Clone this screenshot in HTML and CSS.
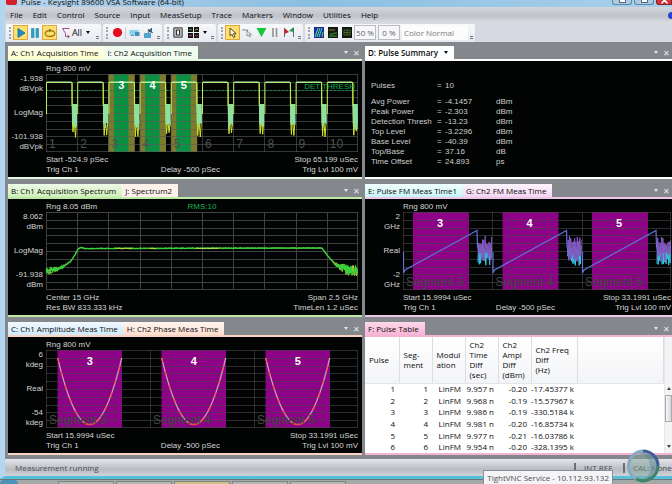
FILE: index.html
```html
<!DOCTYPE html>
<html lang="en">
<head>
<meta charset="utf-8">
<title>Pulse - Keysight 89600 VSA Software (64-bit)</title>
<link rel="stylesheet" href="styles.css">
</head>
<body>
<div class="window">
  <header class="titlebar">
    <span class="app-icon"></span>
    <span class="title">Pulse - Keysight 89600 VSA Software (64-bit)</span>
    <span class="win-buttons">
      <button class="win-btn" aria-label="Minimize"><i></i></button>
      <button class="win-btn" aria-label="Maximize"><i></i></button>
      <button class="win-btn close" aria-label="Close"><svg width="7" height="4" viewBox="0 0 7 4"><path d="M3.500 0L6.500 3.500M3.500 0L.5 3.500" stroke="#fff" stroke-width="1.500"/></svg></button>
    </span>
  </header>

  <nav class="menubar">
    <button>File</button><button>Edit</button><button>Control</button><button>Source</button><button>Input</button><button>MeasSetup</button><button>Trace</button><button>Markers</button><button>Window</button><button>Utilities</button><button>Help</button>
    <span class="help-dot"></span>
  </nav>

  <div class="toolbars">
    <div class="toolbar">
      <span class="grip"></span>
      <button class="tool on" aria-label="Run"><svg width="10" height="12" viewBox="0 0 10 12"><path d="M2 1.500L9 6L2 10.500Z" fill="#1c8fc4" stroke="#0c6a9c" stroke-width=".8"/></svg></button>
      <button class="tool" aria-label="Pause"><svg width="8" height="10" viewBox="0 0 8 10"><path d="M.5.500h2.500v9h-2.500zM5 .500h2.500v9H5z" fill="#2fa3c6" stroke="#1b7fa4" stroke-width=".6"/></svg></button>
      <button class="tool on" aria-label="Repeat"><svg width="12" height="10" viewBox="0 0 12 10"><ellipse cx="6" cy="5.500" rx="4.800" ry="3" fill="none" stroke="#9a7a18" stroke-width="1.300"/><path d="M5 .500L8 2.600L5 4.500Z" fill="#9a7a18"/></svg></button>
      <button class="tool all"><svg width="9" height="12" viewBox="0 0 9 12"><path d="M8.500 1.500H1.500L4.500 6.500V9.500H8" fill="none" stroke="#a0508c"/><path d="M6.500 8l2 1.500l-2 1.500" fill="none" stroke="#555" stroke-width=".8"/></svg><span>All</span><b class="caret"></b></button>
      <span class="more"></span>
    </div>
    <div class="toolbar">
      <span class="grip"></span>
      <button class="tool" aria-label="Record"><svg width="11" height="11" viewBox="0 0 11 11"><circle cx="5.500" cy="5.500" r="4.600" fill="#e30c1c"/></svg></button>
      <span class="rule"></span>
      <button class="tool" aria-label="Playback"><svg width="11" height="8" viewBox="0 0 11 8"><path d="M.5 1h9v5H.5z" fill="#8ad2ea"/><path d="M6 3h4.500v4H6z" fill="#4390b8"/><path d="M2 6h3v1H2z" fill="#5d90ac"/></svg></button>
      <button class="tool" aria-label="Recording options"><svg width="11" height="12" viewBox="0 0 11 12"><path d="M1 6h7v5H1z" fill="#4ea6d0"/><path d="M4 4l5-3v5z" fill="#456f91"/><path d="M9 1l-4 5M5 2l5 4" stroke="#345" stroke-width=".8"/></svg></button>
      <span class="more"></span>
    </div>
    <div class="toolbar">
      <span class="grip"></span>
      <button class="tool" aria-label="Single trace"><svg width="10" height="11" viewBox="0 0 10 11"><path d="M.8.800h8.400v9.400H.8z" fill="#b5b5b8" stroke="#444"/><path d="M3.500 3h3v5h-3z" fill="#eee" stroke="#333"/></svg></button>
      <button class="tool layout" aria-label="Trace layout"><svg width="11" height="11" viewBox="0 0 11 11"><path d="M0 0h5v5H0zM6 0h5v5H6zM0 6h5v5H0zM6 6h5v5H6z" fill="#151515"/><path d="M1 3l1-1l2 1" stroke="#6d6" fill="none" stroke-width=".7"/><path d="M7 3l2-1l1 1" stroke="#dd5" fill="none" stroke-width=".7"/><path d="M1 9l2-1l1 1" stroke="#d6c" fill="none" stroke-width=".7"/><path d="M7 8l2 1l1-1" stroke="#d66" fill="none" stroke-width=".7"/></svg><b class="caret"></b></button>
      <span class="more"></span>
    </div>
    <div class="toolbar">
      <span class="grip"></span>
      <button class="tool on" aria-label="Select"><svg width="10" height="12" viewBox="0 0 10 12"><path d="M2 1v8l2-1.800l1.500 3.300l1.500-.7l-1.500-3.100h2.700z" fill="#fff6d0" stroke="#4a3c10" stroke-width=".9"/></svg></button>
      <button class="tool" aria-label="Marker line"><svg width="11" height="11" viewBox="0 0 11 11"><path d="M0 3h5.500v4" fill="none" stroke="#888"/><path d="M5 4v5l1.500-1l1 2l1-.5l-1-2h2z" fill="#eee" stroke="#777" stroke-width=".7"/></svg></button>
      <button class="tool" aria-label="Marker"><svg width="11" height="11" viewBox="0 0 11 11"><path d="M.5 1h10L5.500 10z" fill="#12c63c"/></svg></button>
      <button class="tool" aria-label="Band"><svg width="10" height="11" viewBox="0 0 10 11"><path d="M3 1v9M6.500 1v9" stroke="#8b8b8e" stroke-width="1.500"/></svg></button>
      <button class="tool" aria-label="Limit flags"><svg width="12" height="11" viewBox="0 0 12 11"><path d="M1.500 1v9M10.500 1v9" stroke="#667" stroke-width="1"/><path d="M1.500 1l4.500 4l-4.500 2z" fill="#d41c30"/><path d="M10.500 0L6 4L10.500 5z" fill="#1c9c4c"/></svg></button>
      <span class="more"></span>
    </div>
    <div class="toolbar">
      <span class="grip"></span>
      <button class="tool" aria-label="Persistence"><svg width="10" height="11" viewBox="0 0 10 11"><path d="M0 0h10v11H0z" fill="#182a8c"/><path d="M1 10L4 1M5 10L8 1" stroke="#27b7e0" stroke-width="1.300"/><path d="M3 10L6 1M8 10l1-5" stroke="#8bc93c"/></svg></button>
      <button class="tool" aria-label="Spectrogram"><svg width="10" height="11" viewBox="0 0 10 11"><path d="M0 0h10v11H0z" fill="#121812"/><path d="M1 9h8M2 7h3l2-1h2" stroke="#49a23d" fill="none"/><path d="M1 3h6" stroke="#8a7a22"/></svg></button>
      <button class="tool" aria-label="Density"><svg width="10" height="11" viewBox="0 0 10 11"><path d="M0 0h10v11H0z" fill="#10180e"/><path d="M2 3h6v5H2zM2 5.500h6M5 3v5" stroke="#4d7a2c" fill="none" stroke-width=".8"/></svg></button>
      <input class="pct" aria-label="Color start" value="50 %">
      <input class="pct" aria-label="Color stop" value="0 %">
      <select class="scheme" aria-label="Color scheme"><option>Color Normal</option></select>
      <span class="more"></span>
    </div>
  </div>

  <main class="workspace">
    <section class="panel p-a">
      <div class="tabs">
        <button class="tab yellow">A: Ch1 Acquisition Time</button><button class="tab mint">I: Ch2 Acquisition Time</button>
        <span class="tools"><b class="caret"></b><button aria-label="Close trace">✕</button></span>
      </div>
      <div class="trace">
        <div class="head"><span>Rng 800 mV</span></div>
        <div class="axis"><span>-1.938<br>dBVpk</span><span>LogMag</span><span>-101.938<br>dBVpk</span></div>
        <div class="plot" id="plot-a"></div>
        <div class="foot"><p><span>Start -524.9 pSec</span><span>Stop 65.199 uSec</span></p><p><span>Trig Ch 1</span><span>Delay -500 pSec</span><span>Trig Lvl 100 mV</span></p></div>
      </div>
    </section>

    <section class="panel p-d">
      <div class="tabs">
        <button class="tab white">D: Pulse Summary <b class="caret"></b></button>
        <span class="tools"><b class="caret"></b><button aria-label="Close trace">✕</button></span>
      </div>
      <div class="summary">
        <dl>
          <dt>Pulses</dt><dd>=</dd><dd>10</dd><dd></dd>
        </dl>
        <dl>
          <dt>Avg Power</dt><dd>=</dd><dd>-4.1457</dd><dd>dBm</dd>
          <dt>Peak Power</dt><dd>=</dd><dd>-2.303</dd><dd>dBm</dd>
          <dt>Detection Thresh</dt><dd>=</dd><dd>-13.23</dd><dd>dBm</dd>
          <dt>Top Level</dt><dd>=</dd><dd>-3.2296</dd><dd>dBm</dd>
          <dt>Base Level</dt><dd>=</dd><dd>-40.39</dd><dd>dBm</dd>
          <dt>Top/Base</dt><dd>=</dd><dd>37.16</dd><dd>dB</dd>
          <dt>Time Offset</dt><dd>=</dd><dd>24.893</dd><dd>ps</dd>
        </dl>
      </div>
    </section>

    <section class="panel p-b">
      <div class="tabs">
        <button class="tab green">B: Ch1 Acquisition Spectrum</button><button class="tab cream">J: Spectrum2</button>
        <span class="tools"><b class="caret"></b><button aria-label="Close trace">✕</button></span>
      </div>
      <div class="trace">
        <div class="head"><span>Rng 8.05 dBm</span><span class="rms">RMS:10</span></div>
        <div class="axis"><span>8.062<br>dBm</span><span>LogMag</span><span>-91.938<br>dBm</span></div>
        <div class="plot" id="plot-b"></div>
        <div class="foot"><p><span>Center 15 GHz</span><span>Span 2.5 GHz</span></p><p><span>Res BW 833.333 kHz</span><span>TimeLen 1.2 uSec</span></p></div>
      </div>
    </section>

    <section class="panel p-e">
      <div class="tabs">
        <button class="tab cyan">E: Pulse FM Meas Time1</button><button class="tab lilac">G: Ch2 FM Meas Time</button>
        <span class="tools"><b class="caret"></b><button aria-label="Close trace">✕</button></span>
      </div>
      <div class="trace edge">
        <div class="head"><span>Rng 800 mV</span></div>
        <div class="axis"><span>2<br>GHz</span><span>Real</span><span>-2<br>GHz</span></div>
        <div class="plot" id="plot-e"></div>
        <div class="foot"><p><span>Start 15.9994 uSec</span><span>Stop 33.1991 uSec</span></p><p><span>Trig Ch 1</span><span>Delay -500 pSec</span><span>Trig Lvl 100 mV</span></p></div>
      </div>
    </section>

    <section class="panel p-c">
      <div class="tabs">
        <button class="tab blue">C: Ch1 Amplitude Meas Time</button><button class="tab peach">H: Ch2 Phase Meas Time</button>
        <span class="tools"><b class="caret"></b><button aria-label="Close trace">✕</button></span>
      </div>
      <div class="trace">
        <div class="head"><span>Rng 800 mV</span></div>
        <div class="axis"><span>6<br>kdeg</span><span>Real</span><span>-54<br>kdeg</span></div>
        <div class="plot" id="plot-c"></div>
        <div class="foot"><p><span>Start 15.9994 uSec</span><span>Stop 33.1991 uSec</span></p><p><span>Trig Ch 1</span><span>Delay -500 pSec</span><span>Trig Lvl 100 mV</span></p></div>
      </div>
    </section>

    <section class="panel p-f">
      <div class="tabs">
        <button class="tab pink">F: Pulse Table</button>
        <span class="tools"><b class="caret"></b><button aria-label="Close trace">✕</button></span>
      </div>
      <div class="sheet">
        <table>
          <colgroup><col class="c-id"><col class="c"><col class="c"><col class="c"><col class="c"><col class="c-freq"><col></colgroup>
          <thead><tr><th>Pulse</th><th>Seg-<br>ment</th><th>Modul<br>ation</th><th>Ch2<br>Time<br>Diff<br>(sec)</th><th>Ch2<br>Ampl<br>Diff<br>(dBm)</th><th>Ch2 Freq<br>Diff<br>(Hz)</th><th></th></tr></thead>
          <tbody>
            <tr><td>1</td><td>1</td><td>LinFM</td><td>9.957 n</td><td>-0.20</td><td>-17.45377 k</td><td></td></tr>
            <tr><td>2</td><td>2</td><td>LinFM</td><td>9.968 n</td><td>-0.19</td><td>-15.57967 k</td><td></td></tr>
            <tr><td>3</td><td>3</td><td>LinFM</td><td>9.986 n</td><td>-0.19</td><td>-330.5184 k</td><td></td></tr>
            <tr><td>4</td><td>4</td><td>LinFM</td><td>9.981 n</td><td>-0.20</td><td>-16.85734 k</td><td></td></tr>
            <tr><td>5</td><td>5</td><td>LinFM</td><td>9.977 n</td><td>-0.21</td><td>-16.03786 k</td><td></td></tr>
            <tr><td>6</td><td>6</td><td>LinFM</td><td>9.954 n</td><td>-0.20</td><td>-328.1395 k</td><td></td></tr>
          </tbody>
        </table>
        <div class="scroll"><b class="caret up"></b><span class="thumb"></span><b class="caret"></b></div>
      </div>
    </section>
  </main>

  <footer class="status">
    <span class="msg">Measurement running</span>
    <span class="cell">INT REF</span>
    <span class="cell">CAL: None</span>
    <svg class="orb" width="34" height="36" viewBox="0 0 34 36">
      <circle cx="17" cy="18" r="15" fill="#7fa39c" fill-opacity=".5"/>
      <path d="M17 3A15 15 0 0 0 10 31" fill="none" stroke="#86a9c4" stroke-width="3"/>
      <path d="M17 3A15 15 0 0 1 32 18" fill="none" stroke="#3c5f9c" stroke-width="3"/>
      <path d="M32 18A15 15 0 0 1 10 31" fill="none" stroke="#3f8463" stroke-width="3"/>
      <path d="M12 6Q22 6 24 16Q26 26 18 32Q32 30 31 17Q28 5 17 4Z" fill="#4a7794" fill-opacity=".35"/>
    </svg>
    <div class="tip" role="tooltip">TightVNC Service - 10.112.93.132</div>
  </footer>
</div>
<div class="taskbar"><span class="start"></span><span class="task"></span><span class="task"></span><span class="task warm"></span><span class="task"></span><span class="task"></span></div>
<script src="plots.js"></script>
</body>
</html>
```
FILE: styles.css
```css
* { box-sizing: border-box; }
body {
  margin: 0;
  background: #a9abaa;
  font: 8px/10px "Open Sans", "Noto Sans", sans-serif;
  color: #0c0c0e;
  overflow: hidden;
}
button, input, select { font: inherit; color: inherit; border: 0; background: none; padding: 0; margin: 0; }
svg { display: block; }
.window { border-left: 5px solid #b4d5f0; border-bottom: 3px solid #55c0dc; background: #d6d9e0; }

.titlebar { display: flex; align-items: flex-end; height: 7px; overflow: hidden; background: linear-gradient(90deg, #b9d4ec, #8bbfe2 45%, #a9d0ea); }
.app-icon { width: 11px; height: 5px; margin: 0 4px 2px 1px; background: #d4202c; border-radius: 0 0 2px 2px; }
.title { line-height: 10px; }
.win-buttons { margin-left: auto; display: flex; gap: 2px; }
.win-btn { display: flex; justify-content: center; width: 20px; height: 5px; margin-bottom: 2px; border: 1px solid #5f87a6; border-top: 0; border-radius: 0 0 3px 3px; background: #a9cbe4; }
.win-btn i { width: 7px; height: 3px; background: #fff; border: 1px solid #567; border-top: 0; }
.win-btn.close { width: 16px; background: #d2333a; border-color: #8c1f28; border-radius: 0 0 0 3px; }

.menubar { display: flex; align-items: center; gap: 10px; height: 16px; padding-left: 5px; background: linear-gradient(#d3d6db, #bfc2c9 55%, #dadce2); }
.help-dot { width: 4px; height: 7px; margin-left: auto; border-radius: 4px 0 0 4px; background: #2743d0; }

.toolbars { display: flex; align-items: center; gap: 2px; height: 19px; padding-left: 1px; background: #d6d9e2; }
.toolbar { display: flex; align-items: center; height: 18px; background: linear-gradient(#f7f8fb, #e6e9ef); border-radius: 2px; }
.grip { width: 2px; height: 12px; margin: 0 2px 0 3px; border-left: 2px dotted #a2a5ab; }
.tool { display: flex; align-items: center; justify-content: center; gap: 2px; width: 14px; height: 15px; }
.tool.on { width: 15px; border: 1px solid #e0a93a; background: #fddf72; }
.tool.all { width: 37px; font-size: 9px; }
.tool.all .caret { margin-left: 2px; }
.tool.layout { width: 24px; gap: 4px; }
.rule { width: 1px; height: 12px; margin: 0 1px; background: #c9ccd2; }
.caret { display: inline-block; width: 0; height: 0; border: 2px solid transparent; border-top: 3px solid currentColor; border-bottom: 0; }
.caret.up { border-top: 0; border-bottom: 3px solid currentColor; }
.more { align-self: flex-end; width: 3px; height: 3px; margin: 0 2px 3px; border-top: 1px solid #777; border-bottom: 1px solid #777; }
.pct { width: 22px; height: 15px; margin-right: 2px; text-align: center; border: 1px solid #b9bcc2; background: #f7f7f9; color: #66686c; }
.scheme { appearance: none; width: 66px; height: 15px; padding-left: 2px; background: #fcfcfd; color: #77797d; }

.workspace { display: grid; grid-template-columns: minmax(0, 354fr) minmax(0, 307fr); gap: 5px 3px; padding: 4px 0 4px 3px; background: #84878b; }
.tabs { display: flex; height: 13px; }
.tab { padding: 0 6px 0 3px; white-space: nowrap; background: #fff; }
.yellow { background: linear-gradient(#fffff0, #fdfdc9); }
.mint { background: #f1fcf0; }
.white { background: #fff; font-weight: 600; }
.white .caret { margin: 0 0 2px 4px; }
.green { background: linear-gradient(#eefae6, #cdf0b9); }
.cream { background: #fdf1ea; }
.cyan { background: linear-gradient(#f0fffe, #c9f4f4); }
.lilac { background: linear-gradient(#fdf4fc, #f4d5f0); }
.blue { background: linear-gradient(#f1f9ff, #cfe8f9); }
.peach { background: linear-gradient(#fff6f1, #fddccd); }
.pink { background: linear-gradient(#fdd9e9, #f8b3d4); }
.tools { display: flex; align-items: center; gap: 5px; margin-left: auto; padding-right: 2px; color: #e6e7e9; }

.trace, .summary, .sheet { min-height: 120px; border: 2px solid; border-width: 2px 0; }
.p-a .trace { border-color: #e6f9df; }
.p-b .trace { border-color: #bce9a5; }
.p-c .trace { border-color: #f9d3c2; }
.p-d .summary { border-color: #fff; }
.p-e .trace { border-color: #ecc6e8; }
.p-f .sheet { border-color: #f6b2d2; }

.trace { display: grid; grid-template: 10px 78px auto / 38px minmax(0, 1fr); padding: 3px 4px 1px 0; background: #020303; color: #d3d5d4; font-family: "Liberation Sans", Arial, sans-serif; }
.trace.edge { padding-right: 1px; }
.head { grid-column: 2; display: grid; grid-template-columns: 1fr auto 1fr; }
.rms { color: #14b24c; }
.axis { display: flex; flex-direction: column; justify-content: space-between; padding-right: 3px; text-align: right; }
.plot { position: relative; }
.plot svg { width: 100%; height: 78px; }
.plot path, .plot line { vector-effect: non-scaling-stroke; fill: none; }
.foot { grid-column: 2; padding-top: 3px; }
.foot p { display: flex; justify-content: space-between; margin: 0; }
.mark { position: absolute; white-space: nowrap; }
.mark.num { top: 6px; transform: translateX(-50%); color: #fff; font-size: 11px; font-weight: 700; }
.mark.seg { bottom: 3px; color: #4f5150; font-size: 12px; }
.mark.seg.dim { color: #434644; }
.mark.det { top: 8px; right: 3px; color: #0fb04e; }

.summary { display: flex; flex-direction: column; gap: 6px; padding: 20px 6px 0; background: #020303; color: #cdcfce; font-family: "Liberation Sans", Arial, sans-serif; }
dl { display: grid; grid-template-columns: 66px 8px 51px 1fr; grid-auto-rows: 10px; margin: 0; }
dd { margin: 0; }

.sheet { display: flex; background: #fff; }
table { flex: 1; table-layout: fixed; border-collapse: collapse; height: 116px; }
.c-id { width: 34px; }
.c { width: 33px; }
.c-freq { width: 44px; }
thead { background: linear-gradient(#fff, #f3f4f6); }
th { height: 46px; padding: 0 0 0 4px; text-align: left; font-weight: 400; border-right: 1px solid #dcdee2; border-bottom: 1px solid #e3e5e8; white-space: nowrap; }
td { padding: 0 4px 0 0; text-align: right; white-space: nowrap; line-height: 10px; }
.scroll { display: flex; flex-direction: column; align-items: center; width: 8px; padding: 50px 0 5px; border-left: 1px solid #e4e5e8; background: #f3f3f5; color: #444; }
.thumb { width: 7px; height: 27px; margin: 5px 0 auto; border: 1px solid #a9abb0; background: linear-gradient(90deg, #f7f7f8, #d5d7da); }

.status { position: relative; display: flex; align-items: center; height: 17px; padding-left: 10px; background: linear-gradient(#e4e6ea, #b9bcc3 60%, #cfd2d8); color: #4c4e52; }
.msg { margin-right: auto; }
.cell { width: 49px; border-left: 2px solid #6a6d72; padding-left: 8px; white-space: nowrap; }
.orb { position: absolute; right: 12px; bottom: -8px; }
.tip { position: absolute; right: 59px; bottom: -9px; padding: 1px 3px; border: 1px solid #8b8d90; background: #f4f4f6; color: #4c4e52; line-height: 11px; white-space: nowrap; }

.taskbar { display: flex; align-items: flex-end; gap: 2px; height: 5px; border-top: 1px solid #6d7376; background: #a4a8a6; }
.start { width: 18px; height: 4px; margin-right: 38px; border-radius: 9px 9px 0 0; background: #4b93b8; }
.task { width: 56px; height: 3px; background: #b4b8b5; border: 1px solid #7f8583; border-bottom: 0; }
.task.warm { background: #cfc08a; }
```
FILE: plots.js
```js
// Draws the trace plots. Every plot is 78 units high; widths are in plot units.
const H = 78;

let seed = 7;
const rnd = () => (seed = (seed * 16807) % 2147483647) / 2147483647;

const path = (pts, color, w = 1, extra = '') =>
  `<path d="M${pts.map(p => p[0].toFixed(1) + ' ' + p[1].toFixed(1)).join('L')}" stroke="${color}" stroke-width="${w}" ${extra}/>`;
const rect = (x, y, w, h, fill) => `<rect x="${x}" y="${y}" width="${w}" height="${h}" fill="${fill}"/>`;

function grid(W, cols, color) {
  let s = '';
  for (let i = 0; i <= 10; i++) {
    const y = Math.min(H - 0.5, Math.round(i * 7.8) + 0.5);
    s += `<line x1="0" x2="${W}" y1="${y}" y2="${y}" stroke="${color}"/>`;
  }
  for (let i = 0; i <= cols; i++) {
    const x = Math.min(W - 0.5, Math.round(i * W / cols) + 0.5);
    s += `<line x1="${x}" x2="${x}" y1="0" y2="${H}" stroke="${color}"/>`;
  }
  return s;
}

function draw(id, W, svg, marks) {
  document.getElementById(id).innerHTML =
    `<svg viewBox="0 0 ${W} ${H}" preserveAspectRatio="none">${svg}</svg>` +
    marks.map(m => `<span class="mark ${m.cls}"${m.x === undefined ? '' : ` style="left:${(m.x / W * 100).toFixed(2)}%"`}>${m.text}</span>`).join('');
}

// A: pulse train with three highlighted segments
(() => {
  const W = 312, P = 31.2;
  let s = '', marks = [];
  for (const i of [2, 3, 4]) {
    s += rect(i * P, 0, 26.4, H, '#7c7a2c') + rect(i * P + 5.5, 0, 14.5, H, '#0a8f43');
  }
  s += grid(W, 10, 'rgba(90,92,90,.6)');
  s += `<line x1="0" x2="${W}" y1="16.5" y2="16.5" stroke="#138a45" stroke-dasharray="2 2"/>`;
  for (let i = 0; i < 10; i++) {
    const x = i * P, n = [];
    s += path([[x + 26, 8.5], [x + 26.5, 50], [x + 27, 58 + rnd() * 5], [x + 28, 44], [x + 29.5, 56 + rnd() * 8], [x + 30.5, 48]], '#d3e224');
    s += rect(x + 26, 30, 5, 19, '#8fe0a0');
    for (let k = 0; k < 8; k++) n.push([x + 26.3 + k * 0.6, k % 2 ? 48 + rnd() * 8 : 30 + rnd() * 4]);
    s += path(n, '#8fe0a0');
    s += path([[x + 0.5, 40], [x + 0.5, 8.5], [x + 26, 8.5], [x + 26, 32]], '#b9ee58', 1);
    s += path([[x + 1, 8], [x + 25.5, 8]], '#a6efb4', 1);
    marks.push({ cls: 'seg', x: x + 3, text: i + 1 });
  }
  for (const i of [2, 3, 4]) marks.push({ cls: 'num', x: i * P + 13, text: i + 1 });
  marks.push({ cls: 'det', text: 'DET THRESH' });
  draw('plot-a', W, s, marks);
})();

// B: averaged spectrum, flat band with noisy skirts
(() => {
  const W = 312;
  const keys = [[0, 60], [8, 58], [16, 55], [24, 50], [29, 43], [32, 37], [35, 35.5], [38, 36.5], [276, 36], [281, 43], [288, 51], [298, 57], [312, 60]];
  const level = x => {
    let i = 1;
    while (keys[i][0] < x) i++;
    const [a, b] = [keys[i - 1], keys[i]];
    return a[1] + (b[1] - a[1]) * (x - a[0]) / (b[0] - a[0]);
  };
  const pts = [], alt = [];
  for (let x = 0; x <= W; x += 0.5) {
    const amp = x < 26 ? 3.2 - x / 9 : x > 284 ? Math.min(5, (x - 284) / 3) : 0.3;
    pts.push([x, level(x) + (rnd() * 2 - 1) * amp]);
    alt.push([x, level(x) + (rnd() * 2 - 1) * amp * 1.1]);
  }
  draw('plot-b', W, grid(W, 10, '#404241') + path(alt, '#b4c232') + path(pts, '#35d23c', 1.3) +
    path([[70, 36.3], [86, 36.3]], '#c8d838') + path([[104, 36.6], [110, 36.6]], '#c8d838') + path([[150, 36.4], [172, 36.4]], '#b4e05a'), []);
})();

// E: FM chirps with noise between the pulses
(() => {
  const W = 268, P = 89.5;
  let s = '', marks = [];
  for (let i = 0; i < 3; i++) s += rect(i * P + 10, 0, 56, H, '#8d0287');
  s += grid(W, 3, 'rgba(70,66,72,.65)');
  for (let i = 0; i < 3; i++) {
    const x = i * P;
    for (const [color, lo, hi] of [['#35c4e0', 32, 54], ['#8559c0', 24, 50]]) {
      const n = [];
      for (let k = 0; k < 22; k++) n.push([x + 75 + k * 0.65, k % 2 ? lo + rnd() * 9 : hi - rnd() * 10]);
      s += path(n, color);
    }
    s += path([[x + 0.5, 40], [x + 0.5, 61], [x + 2, 58], [x + 74, 18.5], [x + 74.5, 34], [x + 76, 42]], '#6272d8', 1.2);
    marks.push({ cls: 'num', x: x + 37, text: i + 3 }, { cls: 'seg dim', x: x + 3, text: 'Segment ' + (i + 3) });
  }
  draw('plot-e', W, s, marks);
})();

// C: phase parabolas
(() => {
  const W = 312, P = 104;
  let s = '', marks = [];
  for (let i = 0; i < 3; i++) s += rect(i * P + 11.5, 0, 64.5, H, '#8d0287');
  s += grid(W, 3, 'rgba(70,66,72,.65)');
  for (let i = 0; i < 3; i++) {
    const c = i * P + 43.7, pts = [];
    for (let t = -32; t <= 32; t++) pts.push([c + t, 74.5 - 66.5 * (t / 32) ** 2]);
    s += path(pts, '#c7a0b8', 1.3) + path(pts, '#ee5050', 1.3, 'stroke-dasharray="5 9"');
    s += path(pts.slice(26, 39), '#f0453c', 1.4);
    marks.push({ cls: 'num', x: c, text: i + 3 }, { cls: 'seg dim', x: i * P + 3, text: 'Segment ' + (i + 3) });
  }
  draw('plot-c', W, s, marks);
})();
```
